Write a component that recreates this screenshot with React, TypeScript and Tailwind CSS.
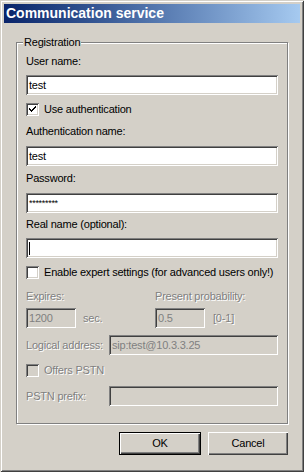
const sunken =
  "shadow-[inset_1px_1px_0_#808080,inset_-1px_-1px_0_#ffffff,inset_2px_2px_0_#404040,inset_-2px_-2px_0_#d4d0c8]";
const raised =
  "shadow-[inset_1px_1px_0_#ffffff,inset_-1px_-1px_0_#404040,inset_-2px_-2px_0_#808080]";

function Label({ children, disabled }: { children: React.ReactNode; disabled?: boolean }) {
  return (
    <div
      className={
        "h-[13px] leading-[13px] whitespace-nowrap " +
        (disabled ? "text-[#808080] [text-shadow:1px_1px_0_#ffffff]" : "text-black")
      }
    >
      {children}
    </div>
  );
}

function Field({
  value,
  disabled,
  className = "",
  children,
}: {
  value?: string;
  disabled?: boolean;
  className?: string;
  children?: React.ReactNode;
}) {
  return (
    <div
      className={
        `flex h-[20px] items-center pl-[3px] leading-[13px] ${sunken} ` +
        (disabled ? "bg-[#d4d0c8] text-[#808080] " : "bg-white text-black ") +
        className
      }
    >
      {value}
      {children}
    </div>
  );
}

function Check({ checked, disabled, label }: { checked?: boolean; disabled?: boolean; label: string }) {
  return (
    <div className="flex h-[13px] items-center gap-[5px]">
      <div
        className={`flex h-[13px] w-[13px] shrink-0 items-center justify-center ${sunken} ${
          disabled ? "bg-[#d4d0c8]" : "bg-white"
        }`}
      >
        {checked && (
          <svg width="7" height="7" viewBox="0 0 7 7">
            <path d="M0 2h1v1h1v1h1V3h1V2h1V1h1V0h1v2H6v1H5v1H4v1H3v1H2V5H1V4H0z" fill="#000" />
          </svg>
        )}
      </div>
      <Label disabled={disabled}>{label}</Label>
    </div>
  );
}

export default function App() {
  return (
    <div className="h-[472px] w-[304px] bg-[#d4d0c8] p-1 font-['Liberation_Sans',Arial,sans-serif] text-[11px] tracking-[-0.2px] shadow-[inset_1px_1px_0_#d4d0c8,inset_-1px_-1px_0_#404040,inset_2px_2px_0_#ffffff,inset_-2px_-2px_0_#808080]">
      {/* Title bar */}
      <div className="flex h-[19px] items-center bg-gradient-to-r from-[#0a246a] to-[#a6caf0] pl-[2px] text-[14px] font-bold leading-[19px] tracking-normal text-white">
        Communication service
      </div>

      <div className="px-3 pt-[19px]">
        {/* Registration group */}
        <div className="relative border border-[#808080] px-[9px] pb-[17px] shadow-[inset_1px_1px_0_#ffffff,1px_1px_0_#ffffff]">
          <div className="absolute -top-[7px] left-[6px] bg-[#d4d0c8] px-[1px] leading-[13px]">
            Registration
          </div>

          <div className="mt-[12px]">
            <Label>User name:</Label>
          </div>
          <Field value="test" className="mt-[7px]" />

          <div className="mt-[8px]">
            <Check checked label="Use authentication" />
          </div>

          <div className="mt-[9px]">
            <Label>Authentication name:</Label>
          </div>
          <Field value="test" className="mt-[8px]" />

          <div className="mt-[6px]">
            <Label>Password:</Label>
          </div>
          <Field className="mt-[8px]">
            <span className="text-[9px] tracking-[-0.3px]">*********</span>
          </Field>

          <div className="mt-[5px]">
            <Label>Real name (optional):</Label>
          </div>
          <Field className="mt-[7px]">
            <span className="h-[13px] w-px bg-black" />
          </Field>

          <div className="mt-[8px]">
            <Check label="Enable expert settings (for advanced users only!)" />
          </div>

          <div className="mt-[11px] grid grid-cols-[129px_1fr]">
            <Label disabled>Expires:</Label>
            <Label disabled>Present probability:</Label>
          </div>
          <div className="mt-[5px] grid grid-cols-[129px_1fr]">
            <div className="flex items-center gap-[7px]">
              <Field disabled value="1200" className="w-[50px]" />
              <Label disabled>sec.</Label>
            </div>
            <div className="flex items-center gap-[8px]">
              <Field disabled value="0.5" className="w-[50px]" />
              <Label disabled>[0-1]</Label>
            </div>
          </div>

          <div className="mt-[7px] flex items-center">
            <div className="w-[83px]">
              <Label disabled>Logical address:</Label>
            </div>
            <Field disabled value="sip:test@10.3.3.25" className="flex-1" />
          </div>

          <div className="mt-[9px]">
            <Check disabled label="Offers PSTN" />
          </div>

          <div className="mt-[9px] flex items-center">
            <div className="w-[83px]">
              <Label disabled>PSTN prefix:</Label>
            </div>
            <Field disabled className="flex-1" />
          </div>
        </div>

        {/* Buttons */}
        <div className="mt-[8px] flex justify-end gap-[7px]">
          <button className="h-[23px] w-[82px] border border-black bg-[#d4d0c8]">
            <div className={`flex h-full w-full items-center justify-center ${raised}`}>OK</div>
          </button>
          <button
            className={`flex h-[23px] w-[80px] items-center justify-center bg-[#d4d0c8] ${raised}`}
          >
            Cancel
          </button>
        </div>
      </div>
    </div>
  );
}
